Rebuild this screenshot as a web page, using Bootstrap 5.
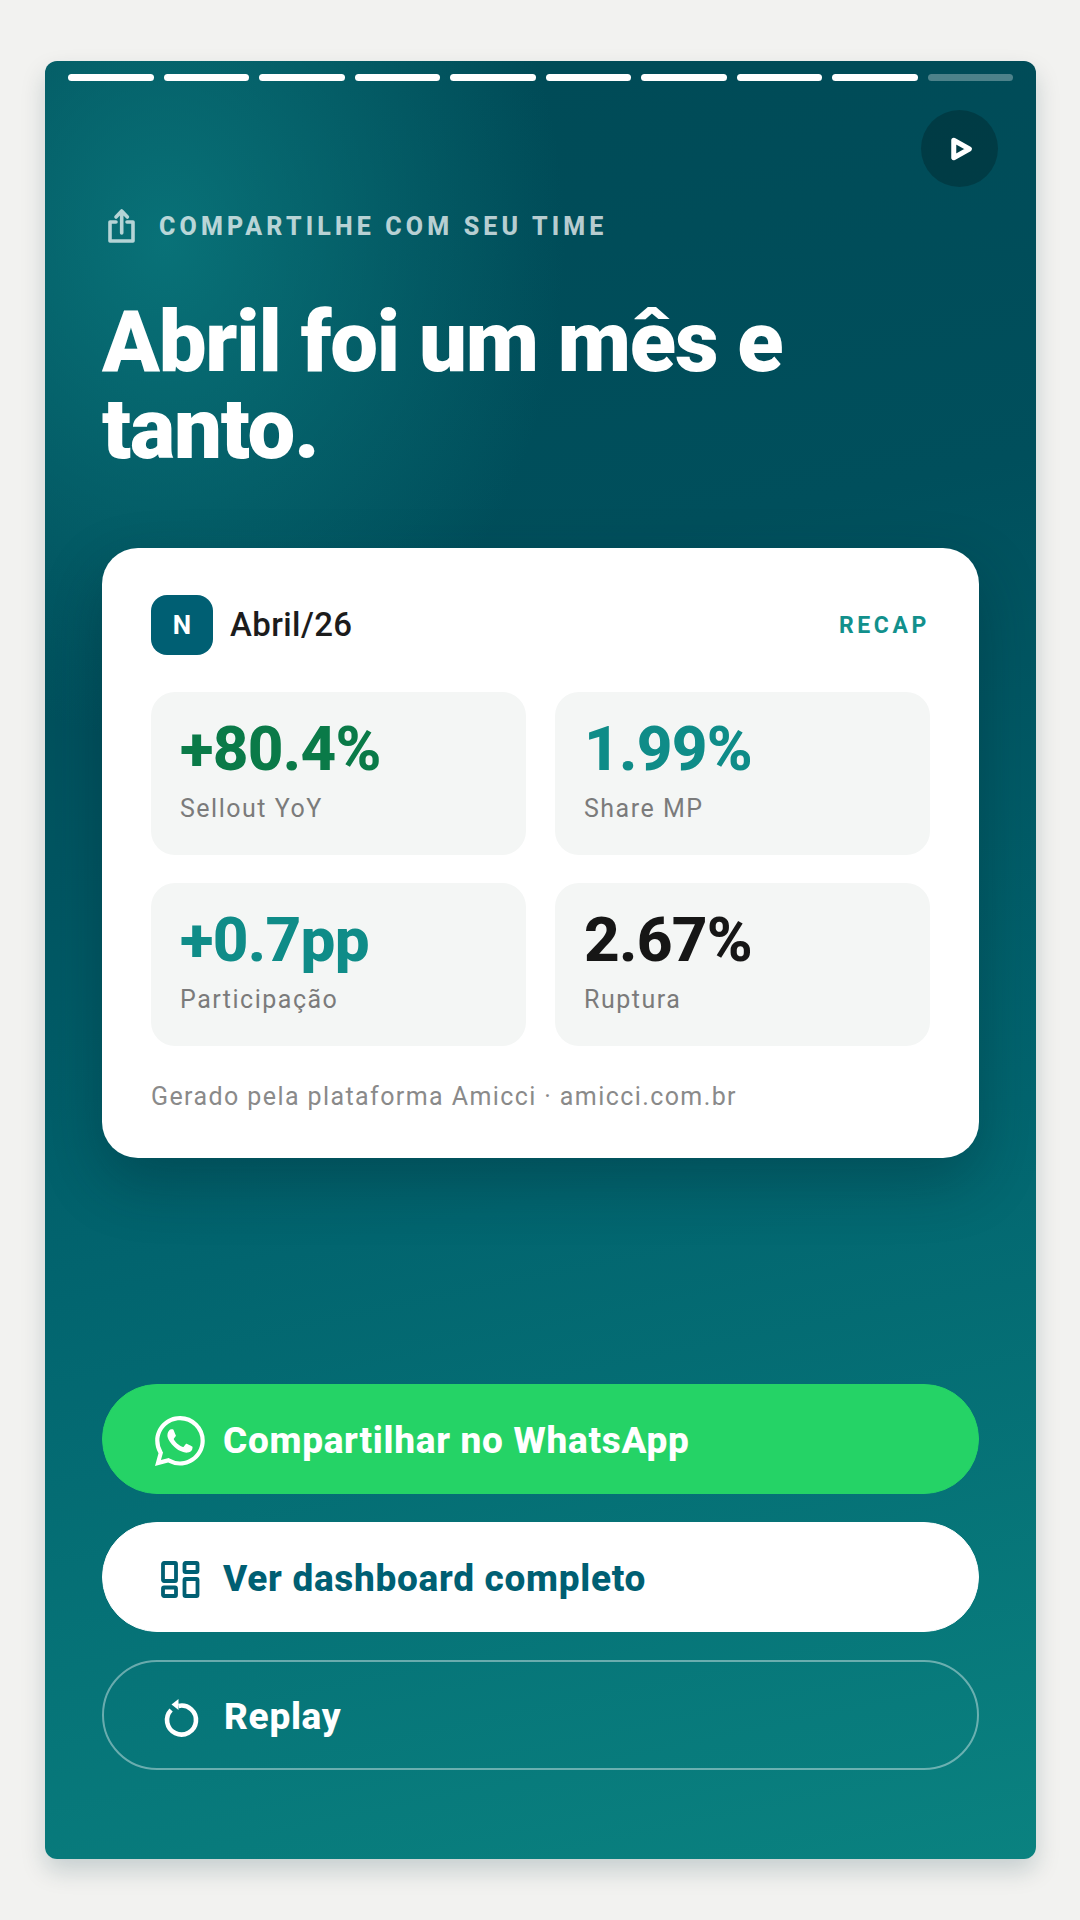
<!DOCTYPE html>
<html lang="pt-BR">
<head>
    <meta charset="UTF-8">
    <meta name="viewport" content="width=device-width, initial-scale=1.0">
    <title>Recap Abril/26</title>
    <link href="https://cdn.jsdelivr.net/npm/bootstrap@5.3.0/dist/css/bootstrap.min.css" rel="stylesheet">
    <style>
        body { background: #f2f2f0; font-family: Roboto, "Liberation Sans", sans-serif; padding: 61px 44px 61px 45px; }
        .stage { width: 991px; height: 1798px; padding: 13px 23px 89px 23px; border-radius: 12px;
            background:
                radial-gradient(ellipse 400px 500px at 120px 180px, rgba(10,120,125,.85), rgba(10,120,125,0) 100%),
                linear-gradient(168deg, #004a56 0%, #004f5c 30%, #02656f 62%, #0a8280 100%);
            box-shadow: 0 12px 24px rgba(0,50,60,.18); }
        .seg-bar { gap: 10px; }
        .seg { flex: 1; height: 7px; border-radius: 4px; background: #fff; }
        .seg-off { background: rgba(255,255,255,.3); }
        .play-btn { width: 77px; height: 77px; margin-top: 29px; margin-right: -1px; background: rgba(0,0,0,.22); }
        .stage-body { padding: 0 34px; }
        .share-line { margin-top: 20px; gap: 17px; color: rgba(255,255,255,.72); font-size: 25px; font-weight: 800; letter-spacing: 4.15px; }
        .big-title { margin: 52px 0 75px; font-size: 85px; line-height: 87px; font-weight: 900; letter-spacing: -1.2px; color: #fff; }
        .recap-card { height: 610px; padding: 47px 49px 0; border: 0; border-radius: 36px; box-shadow: 0 24px 60px rgba(0,30,40,.3); }
        .avatar-n { width: 62px; height: 60px; border-radius: 16px; background: #005f73; color: #fff; font-size: 26px; font-weight: 700; }
        .month-name { margin-left: 17px; font-size: 33px; font-weight: 500; color: #1c1c1c; letter-spacing: .4px; }
        .recap-tag { padding-top: 3px; font-size: 23px; font-weight: 700; letter-spacing: 3.6px; color: #12908c; }
        .stat-row { --bs-gutter-x: 29px; --bs-gutter-y: 28px; margin-top: 9px; }
        .stat-box { height: 163px; padding: 20px 29px; border-radius: 24px; background: #f4f6f5; }
        .stat-val { font-size: 62px; line-height: 74px; font-weight: 800; letter-spacing: -.7px; }
        .stat-lab { margin-top: 8px; font-size: 25px; line-height: 30px; color: #7b7b7b; letter-spacing: 1.5px; }
        .c-green { color: #0a7a48; }
        .c-teal { color: #0f8c88; }
        .c-ink { color: #161616; }
        .gen-note { margin-top: 32px; font-size: 25px; color: #8a8a8a; letter-spacing: 1.41px; }
        .action-stack { gap: 28px; }
        .action-btn { height: 110px; padding: 3px 52px 0; gap: 18px; font-size: 37px; font-weight: 800; letter-spacing: .7px; border-radius: 55px; }
        .action-wa { background: #25d366; border-color: #25d366; color: #fff; }
        .action-dash { background: #fff; border-color: #fff; color: #005f73; }
        .action-replay { background: transparent; border: 2px solid rgba(255,255,255,.4); color: #fff; }
    </style>
</head>
<body>
    <div class="stage d-flex flex-column">
        <div class="seg-bar d-flex">
            <div class="seg"></div><div class="seg"></div><div class="seg"></div><div class="seg"></div><div class="seg"></div>
            <div class="seg"></div><div class="seg"></div><div class="seg"></div><div class="seg"></div><div class="seg seg-off"></div>
        </div>
        <div class="d-flex justify-content-end pe-3">
            <div class="play-btn rounded-circle d-flex align-items-center justify-content-center">
                <svg width="30" height="30" viewBox="0 0 24 24" fill="none" stroke="#fff" stroke-width="4" stroke-linejoin="round"><path d="M7 5 19.5 12 7 19z"/></svg>
            </div>
        </div>
        <div class="stage-body d-flex flex-column flex-grow-1">
            <div class="share-line d-flex align-items-center">
                <svg width="40" height="40" viewBox="0 0 40 40" fill="none" stroke="#b5d4d6" stroke-width="3.6" stroke-linejoin="round" stroke-linecap="round"><path d="M14 15H8v19h23V15h-6M19.7 26V4M14 10l5.7-6 5.7 6"/></svg>
                <span>COMPARTILHE COM SEU TIME</span>
            </div>
            <h1 class="big-title">Abril foi um mês e tanto.</h1>
            <div class="card recap-card">
                <div class="d-flex align-items-center">
                    <div class="avatar-n d-flex align-items-center justify-content-center">N</div>
                    <div class="month-name">Abril/26</div>
                    <div class="recap-tag ms-auto">RECAP</div>
                </div>
                <div class="row stat-row">
                    <div class="col-6"><div class="stat-box"><div class="stat-val c-green">+80.4%</div><div class="stat-lab">Sellout YoY</div></div></div>
                    <div class="col-6"><div class="stat-box"><div class="stat-val c-teal">1.99%</div><div class="stat-lab">Share MP</div></div></div>
                    <div class="col-6"><div class="stat-box"><div class="stat-val c-teal">+0.7pp</div><div class="stat-lab">Participação</div></div></div>
                    <div class="col-6"><div class="stat-box"><div class="stat-val c-ink">2.67%</div><div class="stat-lab">Ruptura</div></div></div>
                </div>
                <div class="gen-note">Gerado pela plataforma Amicci · amicci.com.br</div>
            </div>
            <div class="action-stack d-flex flex-column mt-auto">
                <a class="btn action-btn action-wa d-flex align-items-center" href="#">
                    <svg width="50" height="50" viewBox="0 0 16 16" fill="#fff"><path d="M13.601 2.326A7.854 7.854 0 0 0 7.994 0C3.627 0 .068 3.558.064 7.926c0 1.399.366 2.76 1.057 3.965L0 16l4.204-1.102a7.933 7.933 0 0 0 3.79.965h.004c4.368 0 7.926-3.558 7.93-7.93A7.898 7.898 0 0 0 13.6 2.326zM7.994 14.521a6.573 6.573 0 0 1-3.356-.92l-.24-.144-2.494.654.666-2.433-.156-.251a6.56 6.56 0 0 1-1.007-3.505c0-3.626 2.957-6.584 6.591-6.584a6.56 6.56 0 0 1 4.66 1.931 6.557 6.557 0 0 1 1.928 4.66c-.004 3.639-2.961 6.592-6.592 6.592zm3.615-4.934c-.197-.099-1.17-.578-1.353-.646-.182-.065-.315-.099-.445.099-.133.197-.513.646-.627.775-.114.133-.232.148-.43.05-.197-.1-.836-.308-1.592-.985-.59-.525-.985-1.175-1.103-1.372-.114-.198-.011-.304.088-.403.087-.088.197-.232.296-.346.1-.114.133-.198.198-.33.065-.134.034-.248-.015-.347-.05-.099-.445-1.076-.612-1.47-.16-.389-.323-.335-.445-.34-.114-.007-.247-.007-.38-.007a.729.729 0 0 0-.529.247c-.182.198-.691.677-.691 1.654 0 .977.71 1.916.81 2.049.098.133 1.394 2.132 3.383 2.992.47.205.84.326 1.129.418.475.152.904.129 1.246.08.38-.058 1.171-.48 1.338-.943.164-.464.164-.86.114-.943-.049-.084-.182-.133-.38-.232z"/></svg>
                    <span>Compartilhar no WhatsApp</span>
                </a>
                <a class="btn action-btn action-dash d-flex align-items-center" href="#">
                    <svg width="50" height="50" viewBox="0 0 50 50" fill="none" stroke="#005f73" stroke-width="3.8"><rect x="8" y="9" width="13" height="18" rx="1"/><rect x="29.5" y="9" width="13" height="9" rx="1"/><rect x="29.5" y="25" width="13" height="17" rx="1"/><rect x="8" y="33.5" width="13" height="8.5" rx="1"/></svg>
                    <span>Ver dashboard completo</span>
                </a>
                <a class="btn action-btn action-replay d-flex align-items-center" href="#">
                    <svg width="50" height="50" viewBox="2.5 0 50 50" fill="none" stroke="#fff" stroke-width="4.6"><path d="M25 13.9A14.5 14.5 0 1 1 17.6 18"/><path d="M25 7v11l-7-5.5z" fill="#fff" stroke="none"/></svg>
                    <span>Replay</span>
                </a>
            </div>
        </div>
    </div>
    <script src="https://cdn.jsdelivr.net/npm/bootstrap@5.3.0/dist/js/bootstrap.bundle.min.js"></script>
</body>
</html>
